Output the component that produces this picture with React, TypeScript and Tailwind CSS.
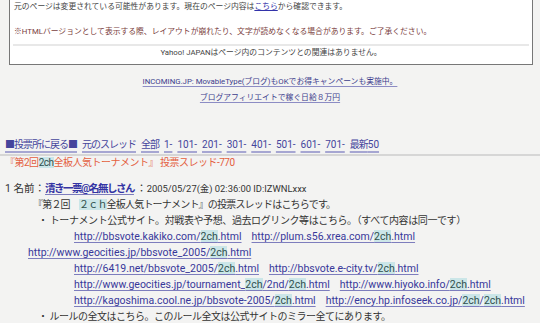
const H = ({ children }: { children: React.ReactNode }) => (
  <span className="bg-[#cbe6e8] text-[#2f4f4c]">{children}</span>
)

const Url = ({ pre, post = '.html', mid }: { pre: string; post?: string; mid?: string }) => (
  <a href="#" className="text-[#38389a] underline decoration-[#7d7dbd] underline-offset-2">
    {pre}
    <H>2ch</H>
    {mid !== undefined && (
      <>
        {mid}
        <H>2ch</H>
      </>
    )}
    {post}
  </a>
)

const NavLink = ({ children, jp }: { children: React.ReactNode; jp?: boolean }) => (
  <a
    href="#"
    className={
      'text-[#45459c] underline decoration-[#a6a6d2] decoration-2 underline-offset-[3px] ' +
      (jp ? 'tracking-[-1px]' : '')
    }
  >
    {children}
  </a>
)

const App = () => {
  return (
    <div className="min-h-screen bg-[#f3f3f2] font-['Roboto','Noto_Sans_CJK_JP',sans-serif] text-[#333] overflow-hidden">
      {/* yahoo cache header */}
      <div className="mx-[9px] -mt-px w-[524px] border border-[#777] bg-white px-[3px] pb-[4px] text-[7.8px]">
        <div className="h-[14px] leading-[14px] pl-[1px] text-[#444]">
          元のページは変更されている可能性があります。現在のページ内容は
          <a href="#" className="text-[#3333aa] underline">こちら</a>
          から確認できます。
        </div>
        <div className="mt-[11px] h-[14px] leading-[14px] pl-[1px] text-[#7a4040]">
          ※HTMLバージョンとして表示する際、レイアウトが崩れたり、文字が読めなくなる場合があります。ご了承ください。
        </div>
        <div className="mt-[5px] h-[2px] bg-[#e8e8e8]" />
        <div className="h-[14px] leading-[14px] text-center text-[#444]">
          Yahoo! JAPANはページ内のコンテンツとの関連はありません。
        </div>
      </div>

      {/* ads */}
      <div className="mt-[9px] flex flex-col items-center text-[7.8px] leading-[16px]">
        <a href="#" className="text-[#3c3c8c] underline decoration-[#8c8cc4] underline-offset-2">
          INCOMING.JP: MovableType(ブログ)もOKでお得キャンペーンも実施中。
        </a>
        <a href="#" className="text-[#3c3c8c] underline decoration-[#8c8cc4] underline-offset-2">
          ブログアフィリエイトで稼ぐ日給８万円
        </a>
      </div>

      {/* nav */}
      <div className="mt-[31px] pl-[5px] text-[10px] leading-[16px] flex gap-[5px] whitespace-nowrap">
        <NavLink jp>■投票所に戻る■</NavLink>
        <NavLink jp>元のスレッド</NavLink>
        <NavLink jp>全部</NavLink>
        <NavLink>1-</NavLink>
        <NavLink>101-</NavLink>
        <NavLink>201-</NavLink>
        <NavLink>301-</NavLink>
        <NavLink>401-</NavLink>
        <NavLink>501-</NavLink>
        <NavLink>601-</NavLink>
        <NavLink>701-</NavLink>
        <NavLink>
          <span className="tracking-[-1px]">最新</span>50
        </NavLink>
      </div>
      <div className="mt-[1px] h-[2px] bg-[#d6d6d6]" />
      <div className="pl-[5px] text-[10px] tracking-[-0.5px] leading-[14px] text-[#e4603e]">
        『第2回<H>2ch</H>全板人気トーナメント』 投票スレッド-770
      </div>

      {/* post */}
      <div className="mt-[11px] text-[10.5px] leading-[16px] whitespace-nowrap">
        <div className="pl-[5px]">
          1 名前：
          <a
            href="#"
            className="font-bold tracking-[-1.5px] text-[#3434a4] underline decoration-[#7d7dbd] underline-offset-2"
          >
            清き一票@名無しさん
          </a>
          <span className="text-[9.4px]">
            {' '}
            <span className="text-[10.5px]">：</span>2005/05/27(金) 02:36:00 ID:IZWNLxxx
          </span>
        </div>
        <div className="pl-[33px] text-[10px] tracking-[-0.8px]">
          『第２回　<H>２ｃｈ</H>全板人気トーナメント』の投票スレッドはこちらです。
        </div>
        <div className="pl-[38px] text-[10px] tracking-[-0.4px]">
          ・ トーナメント公式サイト。対戦表や予想、過去ログリンク等はこちら。（すべて内容は同一です）
        </div>
        <div className="pl-[74px] flex gap-[10px]">
          <Url pre="http://bbsvote.kakiko.com/" />
          <Url pre="http://plum.s56.xrea.com/" />
        </div>
        <div className="pl-[28px]">
          <Url pre="http://www.geocities.jp/bbsvote_2005/" />
        </div>
        <div className="pl-[74px] flex gap-[10px]">
          <Url pre="http://6419.net/bbsvote_2005/" />
          <Url pre="http://bbsvote.e-city.tv/" />
        </div>
        <div className="pl-[74px] flex gap-[10px]">
          <Url pre="http://www.geocities.jp/tournament_" mid="/2nd/" />
          <Url pre="http://www.hiyoko.info/" />
        </div>
        <div className="pl-[74px] flex gap-[10px]">
          <Url pre="http://kagoshima.cool.ne.jp/bbsvote-2005/" />
          <Url pre="http://ency.hp.infoseek.co.jp/" mid="/" />
        </div>
        <div className="pl-[38px] text-[10px] tracking-[-0.5px]">
          ・ ルールの全文はこちら。このルール全文は公式サイトのミラー全てにあります。
        </div>
      </div>
    </div>
  )
}

export default App
